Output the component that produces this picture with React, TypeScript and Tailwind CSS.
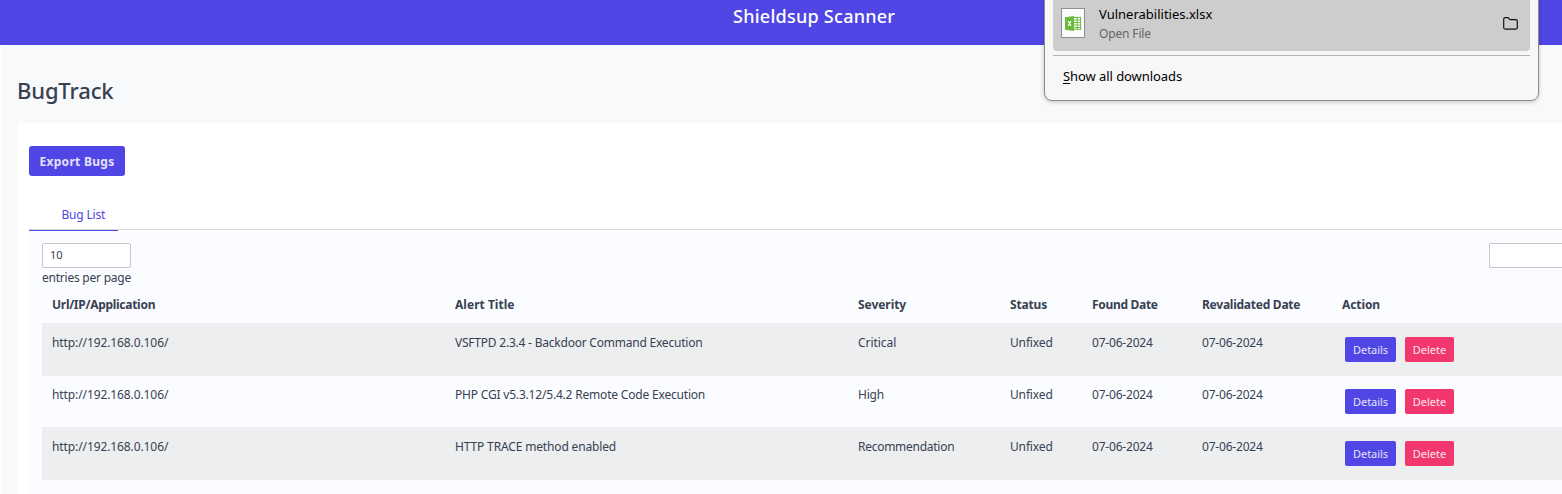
type Bug = {
  url: string;
  title: string;
  titleTracking: string;
  severity: string;
  severityTracking: string;
  row: string;
  pad: string;
  textPad: string;
};

const columns =
  'grid grid-cols-[403px_403px_152px_82px_110px_140px_1fr] pl-[10px]';

const bugs: Bug[] = [
  {
    url: 'http://192.168.0.106/',
    title: 'VSFTPD 2.3.4 - Backdoor Command Execution',
    titleTracking: 'tracking-[-0.22px]',
    severity: 'Critical',
    severityTracking: 'tracking-[-0.05px]',
    row: 'h-[53px] bg-[#edeef0]',
    pad: 'pt-[14px]',
    textPad: 'pt-[11px]',
  },
  {
    url: 'http://192.168.0.106/',
    title: 'PHP CGI v5.3.12/5.4.2 Remote Code Execution',
    titleTracking: 'tracking-[-0.19px]',
    severity: 'High',
    severityTracking: 'tracking-[-0.2px]',
    row: 'h-[51px]',
    pad: 'pt-[13px]',
    textPad: 'pt-[10px]',
  },
  {
    url: 'http://192.168.0.106/',
    title: 'HTTP TRACE method enabled',
    titleTracking: 'tracking-[-0.15px]',
    severity: 'Recommendation',
    severityTracking: 'tracking-[-0.27px]',
    row: 'h-[53px] bg-[#edeef0]',
    pad: 'pt-[14px]',
    textPad: 'pt-[11px]',
  },
];

function Downloads() {
  return (
    <div className="absolute left-[1044px] top-[-8px] h-[109px] w-[495px] rounded-[8px] border border-[#8c8c8c] bg-[#f7f7f7] px-2 text-black shadow-[0_1px_4px_rgba(0,0,0,0.22)]">
      <div className="flex h-[58px] rounded-[4px] bg-[#cdcdcd] pl-2">
        <svg className="mt-[15px] h-[30px] w-6 shrink-0" viewBox="0 0 24 30">
          <rect x="0.5" y="0.5" width="23" height="29" fill="#fbfbfb" stroke="#8f8f8f" />
          <path d="M13 9.500h7M13 12h7M13 14.500h7M13 17h7M13 19.500h7M13 21.300h7M19.600 9v12.800M16.300 9v12.800" stroke="#67b83a" strokeWidth="0.900" />
          <path d="M4 9.300l9-1.300v15L4 21.700z" fill="#6abb38" />
          <path d="M7.200 13l2.800 5M10 13l-2.800 5" stroke="#fff" strokeWidth="1.100" />
        </svg>
        <div className="ml-[14px] flex-1 pt-[11px]">
          <p className="h-[20px] whitespace-nowrap text-[13px] leading-[20px]"><span>Vulnerabilities.xlsx</span></p>
          <p className="h-[18px] whitespace-nowrap pt-px text-[12px] leading-[18px] text-[#666]"><span className="tracking-[-0.15px]">Open File</span></p>
        </div>
        <svg className="mr-3 mt-[24px] h-[13px] w-[15px]" viewBox="0 0 15 13" fill="none" stroke="#111" strokeWidth="1.200">
          <path d="M.7 10.600V2.200Q.7.700 2.200.700H5l2 2h5.800q1.500 0 1.500 1.500v6.400q0 1.500-1.500 1.500H2.200Q.7 12.100.7 10.600z" />
        </svg>
      </div>
      <div className="mt-1 h-px bg-[#b3b3b3]" />
      <p className="ml-[10px] mt-[10px] whitespace-nowrap text-[13px] leading-[20px]">
        <span className="tracking-[-0.07px]"><span className="underline underline-offset-2">S</span>how all downloads</span>
      </p>
    </div>
  );
}

export default function App() {
  return (
    <div className="relative flex h-[494px] w-full flex-col overflow-hidden bg-[#f8f9fb] font-['Noto_Sans',sans-serif] text-[12px] leading-[18px] text-[#374151]">
      <header className="flex h-[45px] shrink-0 bg-[#5046e5] pl-[733px] pt-[3px] text-[18px] font-medium leading-[27px] text-white">
        <h1><span className="whitespace-nowrap tracking-[0.26px]">Shieldsup Scanner</span></h1>
      </header>
      <main className="flex flex-1 flex-col border-l border-white pl-4">
        <h2 className="h-[78px] pt-[30px] text-[22px] font-medium leading-[30px]"><span className="tracking-[-0.15px]">BugTrack</span></h2>
        <section className="flex flex-1 flex-col rounded-tl-[3px] bg-white pl-3 pt-[23px]">
          <button className="h-[30px] w-24 rounded-[3px] bg-[#5046e5] pt-px font-bold text-[#e4e2fb]"><span className="whitespace-nowrap tracking-[0.3px]">Export Bugs</span></button>
          <div className="relative z-10 mt-[22px] h-8 border-b border-[#d5d8dd]">
            <div className="h-[33px] w-[89px] border-b border-[#5046e5] pl-[32.5px] pt-2 text-[#5046e5]"><span className="whitespace-nowrap tracking-[-0.2px]">Bug List</span></div>
          </div>
          <div className="flex-1 bg-[#fbfcff] pl-[13px] pt-[13px]">
            <div className="flex justify-between">
              <div>
                <div className="h-[25px] w-[89px] rounded-[2px] border border-[#c4c6ca] bg-white pl-[7px] text-[11px] leading-[22px]">10</div>
                <div className="mt-px h-[18px] whitespace-nowrap"><span className="tracking-[-0.23px]">entries per page</span></div>
              </div>
              <div className="h-[25px] w-[73px] rounded-l-[2px] border border-r-0 border-[#c4c6ca] bg-white" />
            </div>
            <div className={`${columns} h-[36px] whitespace-nowrap pt-[9px] font-bold`}>
              <div><span className="tracking-[-0.28px]">Url/IP/Application</span></div>
              <div><span className="tracking-[0.03px]">Alert Title</span></div>
              <div><span className="tracking-[-0.05px]">Severity</span></div>
              <div><span className="tracking-[-0.15px]">Status</span></div>
              <div><span className="tracking-[-0.3px]">Found Date</span></div>
              <div><span className="tracking-[-0.25px]">Revalidated Date</span></div>
              <div><span className="tracking-[-0.1px]">Action</span></div>
            </div>
            {bugs.map((bug) => (
              <div key={bug.title} className={`${columns} ${bug.row} whitespace-nowrap`}>
                <div className={bug.textPad}><span className="tracking-[-0.1px]">{bug.url}</span></div>
                <div className={bug.textPad}><span className={bug.titleTracking}>{bug.title}</span></div>
                <div className={bug.textPad}><span className={bug.severityTracking}>{bug.severity}</span></div>
                <div className={bug.textPad}><span className="tracking-[-0.15px]">Unfixed</span></div>
                <div className={bug.textPad}><span className="tracking-[-0.2px]">07-06-2024</span></div>
                <div className={bug.textPad}><span className="tracking-[-0.2px]">07-06-2024</span></div>
                <div className={`flex gap-[9px] pl-[3px] ${bug.pad}`}>
                  <button className="h-[25px] w-[51px] rounded-[2px] bg-[#5046e5] text-[11px] text-[#e4e2fb]"><span className="tracking-[-0.05px]">Details</span></button>
                  <button className="h-[25px] w-[49px] rounded-[2px] bg-[#f1376e] text-[11px] text-[#fde4ec]"><span>Delete</span></button>
                </div>
              </div>
            ))}
          </div>
        </section>
      </main>
      <Downloads />
    </div>
  );
}
